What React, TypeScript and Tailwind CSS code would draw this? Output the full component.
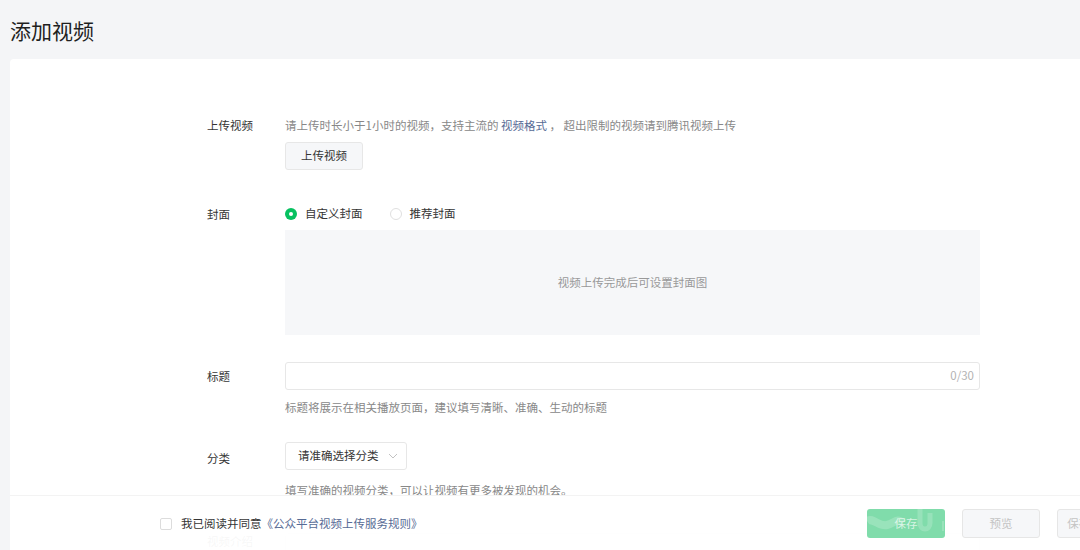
import { type ReactNode } from 'react'

const font = "font-['Noto_Sans_CJK_SC','Noto_Sans',sans-serif]"

function Row({ label, children, labelClass = 'leading-4' }: { label: string; children: ReactNode; labelClass?: string }) {
  return (
    <div className="flex">
      <div className={`w-[78px] shrink-0 text-[11.5px] text-[#353535] ${labelClass}`}>{label}</div>
      <div className="w-[695px]">{children}</div>
    </div>
  )
}

function Radio({ checked, label }: { checked?: boolean; label: string }) {
  return (
    <label className="flex items-center gap-2 h-4">
      {checked ? (
        <span className="flex items-center justify-center w-3 h-3 rounded-full bg-[#07c160]">
          <span className="w-1 h-1 rounded-full bg-white" />
        </span>
      ) : (
        <span className="w-3 h-3 rounded-full border border-[#e0e0e0] bg-white" />
      )}
      <span className="text-[11.5px] text-[#353535]">{label}</span>
    </label>
  )
}

export default function App() {
  return (
    <div className={`relative h-[550px] w-[1080px] overflow-hidden bg-[#f4f5f7] ${font}`}>
      <div className="h-[59px] flex items-center pl-[10px]">
        <h1 className="text-[21px] font-normal text-[#1f1f1f] leading-6">添加视频</h1>
      </div>

      <div className="ml-[10px] w-[1100px] h-[491px] bg-white rounded-tl-[4px] pt-[58px] pl-[197px]">
        <Row label="上传视频">
          <p className="text-[11.5px] leading-4 text-[#888] whitespace-nowrap">
            请上传时长小于1小时的视频，支持主流的 <span className="text-[#576b95]">视频格式</span> ， 超出限制的视频请到腾讯视频上传
          </p>
          <button className="mt-[9px] w-[78px] h-7 rounded-[3px] border border-[#e7e7e7] bg-[#f6f7f9] text-[11.5px] text-[#353535]">
            上传视频
          </button>
        </Row>

        <div className="mt-9">
          <Row label="封面">
            <div className="flex items-center">
              <Radio checked label="自定义封面" />
              <div className="ml-[27px]">
                <Radio label="推荐封面" />
              </div>
            </div>
            <div className="mt-2 h-[105px] bg-[#f6f7f9] flex items-center justify-center">
              <span className="text-[11.5px] text-[#999]">视频上传完成后可设置封面图</span>
            </div>
          </Row>
        </div>

        <div className="mt-[27px]">
          <Row label="标题" labelClass="leading-[28px]">
            <div className="h-7 rounded-[3px] border border-[#e7e7e7] flex items-center justify-end pr-[5px]">
              <span className="text-[11.5px] text-[#b2b2b2]">0/30</span>
            </div>
            <p className="mt-[9px] text-[11.5px] leading-4 text-[#888]">
              标题将展示在相关播放页面，建议填写清晰、准确、生动的标题
            </p>
          </Row>
        </div>

        <div className="mt-[27px]">
          <Row label="分类" labelClass="leading-[28px] pt-[2px]">
            <div className="w-[122px] h-7 rounded-[3px] border border-[#e7e7e7] flex items-center pl-[12px] pr-[8px] justify-between">
              <span className="text-[11.5px] text-[#353535]">请准确选择分类</span>
              <svg width="10" height="6" viewBox="0 0 10 6" fill="none">
                <path d="M1 1l4 4 4-4" stroke="#c2c2c2" strokeWidth="1" />
              </svg>
            </div>
            <p className="mt-3 text-[11.5px] leading-4 text-[#888]">
              填写准确的视频分类，可以让视频有更多被发现的机会。
            </p>
          </Row>
        </div>

        <div className="mt-[35px]">
          <Row label="视频介绍">
            <div className="h-20 rounded-[3px] border border-[#e7e7e7]" />
          </Row>
        </div>
      </div>

      <div className="absolute left-[10px] top-[495px] w-[1150px] h-[55px] bg-white/[0.96] border-t border-[#f3f3f3] flex items-center pl-[150px] pr-[25px] pb-[6px] pt-[7px]">
        <label className="flex items-center gap-[9px]">
          <span className="w-3 h-3 rounded-[2px] border border-[#dcdcdc] bg-white" />
          <span className="text-[11.5px] text-[#353535]">
            我已阅读并同意<span className="text-[#576b95]">《公众平台视频上传服务规则》</span>
          </span>
        </label>
        <div className="ml-auto flex gap-[17px]">
          <button className="relative overflow-hidden w-[78px] h-[29px] rounded-[3px] bg-[#80dcab] text-[11.5px] text-white/70">
            <svg className="absolute inset-0" width="78" height="29" viewBox="0 0 78 29" fill="none">
              <path d="M0 12c6-4 12 6 20 4s10-8 16-2" stroke="white" strokeOpacity="0.2" strokeWidth="8" />
              <path d="M53 0v14c0 8 10 8 10 0V4" stroke="white" strokeOpacity="0.18" strokeWidth="5" />
              <path d="M76 12v10" stroke="white" strokeOpacity="0.25" strokeWidth="1.5" />
            </svg>
            <span className="relative">保存</span>
          </button>
          <button className="w-[78px] h-[29px] rounded-[3px] border border-[#e6e6e6] bg-[#f6f7f9] text-[11.5px] text-[#c4c4c4]">
            预览
          </button>
          <button className="w-[78px] h-[29px] rounded-[3px] border border-[#e6e6e6] bg-[#f6f7f9] text-[11.5px] text-[#c4c4c4] whitespace-nowrap overflow-hidden">
            保存并群发
          </button>
        </div>
      </div>
    </div>
  )
}
